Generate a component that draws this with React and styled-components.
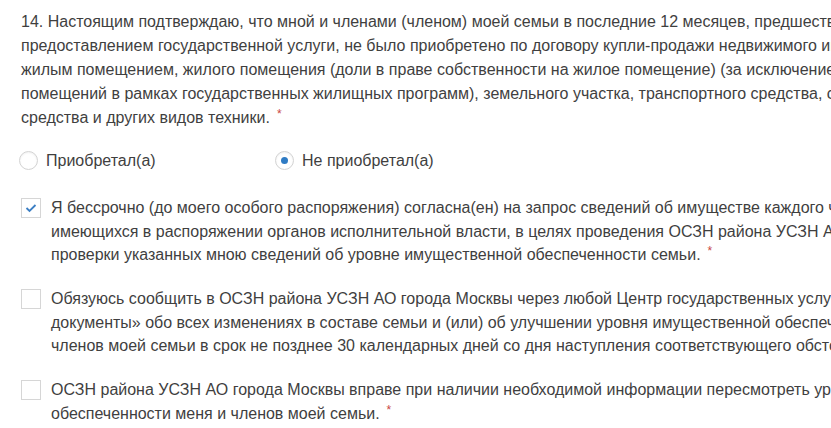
import styled, { createGlobalStyle } from "styled-components";
import { useState } from "react";

const GlobalStyle = createGlobalStyle`
    html, body {
        margin: 0;
        padding: 0;
        background: #ffffff;
        overflow: hidden;
    }
`;

const question = [
    "14. Настоящим подтверждаю, что мной и членами (членом) моей семьи в последние 12 месяцев, предшествующих обращению за",
    "предоставлением государственной услуги, не было приобретено по договору купли-продажи недвижимого имущества (за исключением",
    "жилым помещением, жилого помещения (доли в праве собственности на жилое помещение) (за исключением приобретения жилых",
    "помещений в рамках государственных жилищных программ), земельного участка, транспортного средства, самоходного",
    "средства и других видов техники.",
];

const agreements = [
    {
        id: "consent",
        lines: [
            "Я бессрочно (до моего особого распоряжения) согласна(ен) на запрос сведений об имуществе каждого члена моей семьи,",
            "имеющихся в распоряжении органов исполнительной власти, в целях проведения ОСЗН района УСЗН АО города Москвы",
            "проверки указанных мною сведений об уровне имущественной обеспеченности семьи.",
        ],
        checked: true,
    },
    {
        id: "notify",
        lines: [
            "Обязуюсь сообщить в ОСЗН района УСЗН АО города Москвы через любой Центр государственных услуг «Мои",
            "документы» обо всех изменениях в составе семьи и (или) об улучшении уровня имущественной обеспеченности моей семьи и",
            "членов моей семьи в срок не позднее 30 календарных дней со дня наступления соответствующего обстоятельства.",
        ],
        checked: false,
    },
    {
        id: "review",
        lines: [
            "ОСЗН района УСЗН АО города Москвы вправе при наличии необходимой информации пересмотреть уровень имущественной",
            "обеспеченности меня и членов моей семьи.",
        ],
        checked: false,
    },
];

function Lines({ lines }) {
    return lines.map((line, i) => (
        <Line key={i}>
            {line}
            {i === lines.length - 1 && <Required>*</Required>}
        </Line>
    ));
}

export default function App() {
    const [bought, setBought] = useState("no");
    const [checks, setChecks] = useState(
        Object.fromEntries(agreements.map((a) => [a.id, a.checked]))
    );

    return (
        <Page>
            <GlobalStyle />
            <Question>
                <Lines lines={question} />
            </Question>

            <RadioGroup>
                <RadioLabel onClick={() => setBought("yes")}>
                    <Radio $active={bought === "yes"} />
                    Приобретал(а)
                </RadioLabel>
                <RadioLabel onClick={() => setBought("no")}>
                    <Radio $active={bought === "no"} />
                    Не приобретал(а)
                </RadioLabel>
            </RadioGroup>

            <Agreements>
                {agreements.map((a) => (
                    <CheckRow
                        key={a.id}
                        onClick={() => setChecks({ ...checks, [a.id]: !checks[a.id] })}
                    >
                        <Box>
                            {checks[a.id] && (
                                <svg width="12" height="10" viewBox="0 0 12 10">
                                    <path
                                        d="M1.5 5 L4.5 8 L10.5 2"
                                        fill="none"
                                        stroke="#3c7fc4"
                                        strokeWidth="1.8"
                                    />
                                </svg>
                            )}
                        </Box>
                        <CheckText>
                            <Lines lines={a.lines} />
                        </CheckText>
                    </CheckRow>
                ))}
            </Agreements>
        </Page>
    );
}

const Page = styled.div`
    width: 1200px;
    padding: 10px 0 0 21px;
    font-family: "Liberation Sans", Arial, sans-serif;
    font-size: 16px;
    line-height: 23.9px;
    color: #3f3f3f;
`;

const Question = styled.div``;

const Line = styled.div`
    white-space: nowrap;
`;

const Required = styled.span`
    color: #c9473f;
    font-size: 12px;
    vertical-align: top;
    margin-left: 7px;
    position: relative;
    top: -3px;
`;

const RadioGroup = styled.div`
    display: flex;
    margin-top: 19px;
`;

const RadioLabel = styled.label`
    display: flex;
    align-items: center;
    gap: 8px;
    width: 258px;
    margin-left: -2px;
    cursor: pointer;
`;

const Radio = styled.span`
    width: 17px;
    height: 17px;
    border: 1px solid #d3d3d3;
    border-radius: 50%;
    background: #fff;
    box-shadow: inset 0 1px 2px rgba(0, 0, 0, 0.06);
    display: flex;
    align-items: center;
    justify-content: center;
    &::after {
        content: "";
        display: ${(p) => (p.$active ? "block" : "none")};
        width: 7px;
        height: 7px;
        border-radius: 50%;
        background: #2f7bc4;
    }
`;

const Agreements = styled.div`
    display: flex;
    flex-direction: column;
    gap: 21px;
    margin-top: 24px;
`;

const CheckRow = styled.div`
    display: flex;
    align-items: flex-start;
    gap: 10px;
    cursor: pointer;
`;

const Box = styled.span`
    flex: none;
    width: 18px;
    height: 18px;
    margin-top: 2px;
    border: 1px solid #d6d6d6;
    background: #fff;
    display: flex;
    align-items: center;
    justify-content: center;
`;

const CheckText = styled.div`
    line-height: 23.3px;
`;
